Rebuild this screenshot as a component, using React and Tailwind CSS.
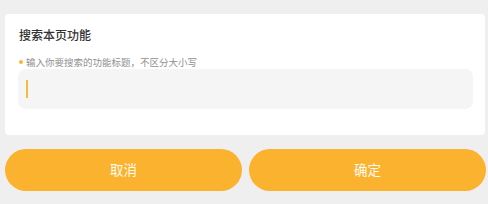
import React from "react";

export default function App() {
  return (
    <div
      className="w-[488px] h-[204px] bg-[#efefef] pt-[14px] px-[5px] overflow-hidden"
      style={{ fontFamily: '"Noto Sans CJK SC", "Noto Sans", sans-serif' }}
    >
      {/* Search card */}
      <div className="w-[480px] h-[121px] bg-white rounded-[4px] pt-[13px] pl-[13px] pr-[12px]">
        <div className="pl-[1px] text-[12px] leading-[16px] font-medium text-[#333333]">
          搜索本页功能
        </div>
        <div className="mt-[12px] flex items-center h-[14px] pl-[1px]">
          <span className="w-[4px] h-[4px] rounded-full bg-[#f8b53c] mr-[3px]" />
          <span className="text-[9.5px] leading-[14px] text-[#909090]">
            输入你要搜索的功能标题，不区分大小写
          </span>
        </div>
        <div className="h-[40px] bg-[#f5f5f5] rounded-[8px] flex items-center pl-[8px]">
          <span className="w-[2px] h-[18px] bg-[#f6bb3a]" />
        </div>
      </div>

      {/* Actions */}
      <div className="mt-[14px] flex gap-[7px] w-[481px]">
        <button className="flex-1 h-[42px] rounded-full bg-[#fbb22f] text-[#fffbef] text-[13.5px] leading-none">
          取消
        </button>
        <button className="flex-1 h-[42px] rounded-full bg-[#fbb22f] text-[#fffbef] text-[13.5px] leading-none">
          确定
        </button>
      </div>
    </div>
  );
}
